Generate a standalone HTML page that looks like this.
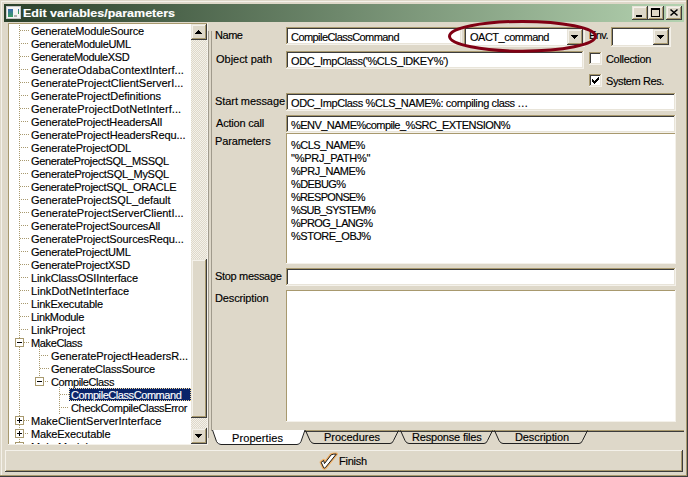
<!DOCTYPE html><html><head><meta charset="utf-8"><style>
html,body{margin:0;padding:0;}
body{width:688px;height:477px;position:relative;overflow:hidden;background:#DED8C9;font-family:'Liberation Sans', sans-serif;}
div{position:absolute;}
span{position:absolute;white-space:pre;line-height:13px;font-family:'Liberation Sans', sans-serif;-webkit-text-stroke:0.15px currentColor;}
</style></head><body>
<div style="left:0px;top:0px;width:688px;height:477px;background:#DED8C9;"></div><div style="left:1px;top:1px;width:685px;height:1px;background:#F4F1EA;"></div><div style="left:1px;top:1px;width:1px;height:474px;background:#F4F1EA;"></div><div style="left:686px;top:0px;width:1px;height:476px;background:#A8996E;"></div><div style="left:0px;top:475px;width:687px;height:1px;background:#A8996E;"></div><div style="left:687px;top:0px;width:1px;height:477px;background:#3C3C3C;"></div><div style="left:0px;top:476px;width:688px;height:1px;background:#3C3C3C;"></div><div style="left:4px;top:4px;width:680px;height:18px;background:linear-gradient(to right,#2A402A,#B4D2B0);"></div><div style="left:6px;top:6px;width:15px;height:13px;background:#F4F4F4;box-shadow:inset 0 0 0 1px #C8C8C8;"></div><div style="left:8px;top:9px;width:5px;height:8px;background:linear-gradient(#3A6AB0,#3AA060);"></div><div style="left:18px;top:9px;width:1px;height:5px;background:linear-gradient(#3A6AB0,#40B040);"></div><div style="left:14px;top:15px;width:3px;height:2px;background:#B0B0B0;"></div><div style="left:632px;top:6px;width:16px;height:14px;background:#3C3C3C;"></div><div style="left:632px;top:6px;width:15px;height:13px;background:#E8E4D9;"></div><div style="left:633px;top:7px;width:14px;height:12px;background:#F4F1EA;"></div><div style="left:633px;top:7px;width:14px;height:12px;background:#A8996E;"></div><div style="left:633px;top:7px;width:13px;height:11px;background:#F4F1EA;"></div><div style="left:634px;top:8px;width:12px;height:10px;background:#DED8C9;"></div><div style="left:648px;top:6px;width:16px;height:14px;background:#3C3C3C;"></div><div style="left:648px;top:6px;width:15px;height:13px;background:#E8E4D9;"></div><div style="left:649px;top:7px;width:14px;height:12px;background:#F4F1EA;"></div><div style="left:649px;top:7px;width:14px;height:12px;background:#A8996E;"></div><div style="left:649px;top:7px;width:13px;height:11px;background:#F4F1EA;"></div><div style="left:650px;top:8px;width:12px;height:10px;background:#DED8C9;"></div><div style="left:666px;top:6px;width:16px;height:14px;background:#3C3C3C;"></div><div style="left:666px;top:6px;width:15px;height:13px;background:#E8E4D9;"></div><div style="left:667px;top:7px;width:14px;height:12px;background:#F4F1EA;"></div><div style="left:667px;top:7px;width:14px;height:12px;background:#A8996E;"></div><div style="left:667px;top:7px;width:13px;height:11px;background:#F4F1EA;"></div><div style="left:668px;top:8px;width:12px;height:10px;background:#DED8C9;"></div><div style="left:636px;top:15px;width:6px;height:2px;background:#000;"></div><div style="left:651px;top:8px;width:9px;height:9px;background:#000;"></div><div style="left:652px;top:10px;width:7px;height:6px;background:#DED8C9;"></div><div style="left:8px;top:23px;width:200px;height:422px;background:#F4F1EA;"></div><div style="left:8px;top:23px;width:199px;height:421px;background:#A8996E;"></div><div style="left:9px;top:24px;width:182px;height:420px;background:#FFFFFF;"></div><div style="left:191px;top:24px;width:16px;height:420px;background:repeating-conic-gradient(#F4F1EA 0 25%, #DED8C9 0 50%) 0 0/2px 2px;"></div><div style="left:191px;top:24px;width:16px;height:16px;background:#3C3C3C;"></div><div style="left:191px;top:24px;width:15px;height:15px;background:#E8E4D9;"></div><div style="left:192px;top:25px;width:14px;height:14px;background:#F4F1EA;"></div><div style="left:192px;top:25px;width:14px;height:14px;background:#A8996E;"></div><div style="left:192px;top:25px;width:13px;height:13px;background:#F4F1EA;"></div><div style="left:193px;top:26px;width:12px;height:12px;background:#DED8C9;"></div><div style="left:191px;top:428px;width:16px;height:16px;background:#3C3C3C;"></div><div style="left:191px;top:428px;width:15px;height:15px;background:#E8E4D9;"></div><div style="left:192px;top:429px;width:14px;height:14px;background:#F4F1EA;"></div><div style="left:192px;top:429px;width:14px;height:14px;background:#A8996E;"></div><div style="left:192px;top:429px;width:13px;height:13px;background:#F4F1EA;"></div><div style="left:193px;top:430px;width:12px;height:12px;background:#DED8C9;"></div><div style="left:191px;top:259px;width:16px;height:159px;background:#3C3C3C;"></div><div style="left:191px;top:259px;width:15px;height:158px;background:#E8E4D9;"></div><div style="left:192px;top:260px;width:14px;height:157px;background:#F4F1EA;"></div><div style="left:192px;top:260px;width:14px;height:157px;background:#A8996E;"></div><div style="left:192px;top:260px;width:13px;height:156px;background:#F4F1EA;"></div><div style="left:193px;top:261px;width:12px;height:155px;background:#DED8C9;"></div><div style="left:208px;top:31px;width:1px;height:407px;background:#A09A8C;"></div><div style="left:211px;top:31px;width:1px;height:400px;background:#A09A8C;"></div><div style="left:286px;top:27px;width:176px;height:18px;background:#F4F1EA;"></div><div style="left:286px;top:27px;width:175px;height:17px;background:#A8996E;"></div><div style="left:287px;top:28px;width:174px;height:16px;background:#E8E4D9;"></div><div style="left:287px;top:28px;width:173px;height:15px;background:#3C3C3C;"></div><div style="left:288px;top:29px;width:172px;height:14px;background:#fff;"></div><div style="left:286px;top:51px;width:298px;height:18px;background:#F4F1EA;"></div><div style="left:286px;top:51px;width:297px;height:17px;background:#A8996E;"></div><div style="left:287px;top:52px;width:296px;height:16px;background:#E8E4D9;"></div><div style="left:287px;top:52px;width:295px;height:15px;background:#3C3C3C;"></div><div style="left:288px;top:53px;width:294px;height:14px;background:#fff;"></div><div style="left:464px;top:27px;width:121px;height:20px;background:#F4F1EA;"></div><div style="left:464px;top:27px;width:120px;height:19px;background:#A8996E;"></div><div style="left:465px;top:28px;width:119px;height:18px;background:#E8E4D9;"></div><div style="left:465px;top:28px;width:118px;height:17px;background:#3C3C3C;"></div><div style="left:466px;top:29px;width:117px;height:16px;background:#fff;"></div><div style="left:567px;top:29px;width:16px;height:16px;background:#3C3C3C;"></div><div style="left:567px;top:29px;width:15px;height:15px;background:#E8E4D9;"></div><div style="left:568px;top:30px;width:14px;height:14px;background:#F4F1EA;"></div><div style="left:568px;top:30px;width:14px;height:14px;background:#A8996E;"></div><div style="left:568px;top:30px;width:13px;height:13px;background:#F4F1EA;"></div><div style="left:569px;top:31px;width:12px;height:12px;background:#DED8C9;"></div><div style="left:611px;top:27px;width:60px;height:20px;background:#F4F1EA;"></div><div style="left:611px;top:27px;width:59px;height:19px;background:#A8996E;"></div><div style="left:612px;top:28px;width:58px;height:18px;background:#E8E4D9;"></div><div style="left:612px;top:28px;width:57px;height:17px;background:#3C3C3C;"></div><div style="left:613px;top:29px;width:56px;height:16px;background:#fff;"></div><div style="left:653px;top:29px;width:16px;height:16px;background:#3C3C3C;"></div><div style="left:653px;top:29px;width:15px;height:15px;background:#E8E4D9;"></div><div style="left:654px;top:30px;width:14px;height:14px;background:#F4F1EA;"></div><div style="left:654px;top:30px;width:14px;height:14px;background:#A8996E;"></div><div style="left:654px;top:30px;width:13px;height:13px;background:#F4F1EA;"></div><div style="left:655px;top:31px;width:12px;height:12px;background:#DED8C9;"></div><div style="left:589px;top:52px;width:13px;height:13px;background:#F4F1EA;"></div><div style="left:589px;top:52px;width:12px;height:12px;background:#A8996E;"></div><div style="left:590px;top:53px;width:11px;height:11px;background:#E8E4D9;"></div><div style="left:590px;top:53px;width:10px;height:10px;background:#3C3C3C;"></div><div style="left:591px;top:54px;width:9px;height:9px;background:#fff;"></div><div style="left:589px;top:74px;width:13px;height:13px;background:#F4F1EA;"></div><div style="left:589px;top:74px;width:12px;height:12px;background:#A8996E;"></div><div style="left:590px;top:75px;width:11px;height:11px;background:#E8E4D9;"></div><div style="left:590px;top:75px;width:10px;height:10px;background:#3C3C3C;"></div><div style="left:591px;top:76px;width:9px;height:9px;background:#fff;"></div><div style="left:286px;top:93px;width:390px;height:18px;background:#F4F1EA;"></div><div style="left:286px;top:93px;width:389px;height:17px;background:#A8996E;"></div><div style="left:287px;top:94px;width:388px;height:16px;background:#E8E4D9;"></div><div style="left:287px;top:94px;width:387px;height:15px;background:#3C3C3C;"></div><div style="left:288px;top:95px;width:386px;height:14px;background:#fff;"></div><div style="left:286px;top:115px;width:390px;height:18px;background:#F4F1EA;"></div><div style="left:286px;top:115px;width:389px;height:17px;background:#A8996E;"></div><div style="left:287px;top:116px;width:388px;height:16px;background:#E8E4D9;"></div><div style="left:287px;top:116px;width:387px;height:15px;background:#3C3C3C;"></div><div style="left:288px;top:117px;width:386px;height:14px;background:#fff;"></div><div style="left:286px;top:133px;width:390px;height:131px;background:#F4F1EA;"></div><div style="left:286px;top:133px;width:389px;height:130px;background:#A8996E;"></div><div style="left:287px;top:134px;width:388px;height:129px;background:#fff;"></div><div style="left:286px;top:268px;width:390px;height:18px;background:#F4F1EA;"></div><div style="left:286px;top:268px;width:389px;height:17px;background:#A8996E;"></div><div style="left:287px;top:269px;width:388px;height:16px;background:#E8E4D9;"></div><div style="left:287px;top:269px;width:387px;height:15px;background:#3C3C3C;"></div><div style="left:288px;top:270px;width:386px;height:14px;background:#fff;"></div><div style="left:286px;top:290px;width:390px;height:132px;background:#F4F1EA;"></div><div style="left:286px;top:290px;width:389px;height:131px;background:#A8996E;"></div><div style="left:287px;top:291px;width:388px;height:130px;background:#fff;"></div><div style="left:305px;top:430px;width:379px;height:1px;background:#A8996E;"></div><div style="left:305px;top:431px;width:379px;height:1px;background:#3C3C3C;"></div><svg width="688" height="477" style="position:absolute;left:0;top:0"><path d="M212 430 L218 444.5 L300 444.5 L305.5 430 Z" fill="#fff" stroke="none"/><path d="M212.5 430 L216.5 441.5 Q218 444.5 221 444.5 L297 444.5 Q300 444.5 301 441.5 L305 430" fill="none" stroke="#202020" stroke-width="1"/><path d="M305.5 430.5 L310 440.5 Q311.5 443.5 314 443.5 L390 443.5 Q392.5 443.5 393.5 440.5 L398.5 430.5" fill="none" stroke="#202020" stroke-width="1"/><path d="M400.5 430.5 L405 440.5 Q406.5 443.5 409 443.5 L484 443.5 Q486.5 443.5 487.5 440.5 L492.5 430.5" fill="none" stroke="#202020" stroke-width="1"/><path d="M494.5 430.5 L499 440.5 Q500.5 443.5 503 443.5 L579 443.5 Q581.5 443.5 582.5 440.5 L587.5 430.5" fill="none" stroke="#202020" stroke-width="1"/></svg><div style="left:5px;top:450px;width:678px;height:22px;background:#3C3C3C;"></div><div style="left:5px;top:450px;width:677px;height:21px;background:#F4F1EA;"></div><div style="left:6px;top:451px;width:676px;height:20px;background:#A8996E;"></div><div style="left:6px;top:451px;width:675px;height:19px;background:#DED8C9;"></div><svg width="688" height="477" style="position:absolute;left:0;top:0"><path d="M321.2 462.3 L323.6 460.5 L324.5 463.6 L331.2 454.8 Q333.5 453.9 336.3 454.1 L325.4 467.6 Q324.5 468.4 323.7 467.8 Z" fill="none" stroke="#F5A040" stroke-width="3.2" stroke-linejoin="round" opacity="0.75"/><path d="M321.2 462.3 L323.6 460.5 L324.5 463.6 L331.2 454.8 Q333.5 453.9 336.3 454.1 L325.4 467.6 Q324.5 468.4 323.7 467.8 Z" fill="#fff" stroke="#1a1a1a" stroke-width="1.0" stroke-linejoin="round"/></svg><div style="left:69px;top:388px;width:122px;height:13px;background:#0A246A;"></div><span style="left:23px;top:7px;font-size:11px;font-weight:700;color:#FFFFFF;transform:scaleX(1.1351);transform-origin:0 0">Edit variables/parameters</span><span style="left:215px;top:29px;font-size:11px;font-weight:400;color:#000000;letter-spacing:-0.461px">Name</span><span style="left:216px;top:53px;font-size:11px;font-weight:400;color:#000000;letter-spacing:-0.024px">Object path</span><span style="left:215px;top:95px;font-size:11px;font-weight:400;color:#000000;letter-spacing:-0.071px">Start message</span><span style="left:216px;top:117px;font-size:11px;font-weight:400;color:#000000;letter-spacing:-0.195px">Action call</span><span style="left:215px;top:135px;font-size:11px;font-weight:400;color:#000000;letter-spacing:-0.136px">Parameters</span><span style="left:215px;top:270px;font-size:11px;font-weight:400;color:#000000;letter-spacing:-0.319px">Stop message</span><span style="left:215px;top:292px;font-size:11px;font-weight:400;color:#000000;letter-spacing:-0.139px">Description</span><span style="left:589px;top:29px;font-size:11px;font-weight:400;color:#000000;letter-spacing:-0.551px">Env.</span><span style="left:606px;top:53px;font-size:11px;font-weight:400;color:#000000;letter-spacing:-0.331px">Collection</span><span style="left:606px;top:75px;font-size:11px;font-weight:400;color:#000000;letter-spacing:-0.396px">System Res.</span><span style="left:291px;top:31px;font-size:11px;font-weight:400;color:#000000;letter-spacing:-0.558px">CompileClassCommand</span><span style="left:291px;top:55px;font-size:11px;font-weight:400;color:#000000;letter-spacing:-0.409px">ODC_ImpClass(&#x27;%CLS_IDKEY%&#x27;)</span><span style="left:470px;top:31px;font-size:11px;font-weight:400;color:#000000;letter-spacing:-0.499px">OACT_command</span><span style="left:291px;top:97px;font-size:11px;font-weight:400;color:#000000;letter-spacing:-0.383px">ODC_ImpClass %CLS_NAME%: compiling class …</span><span style="left:291px;top:119px;font-size:11px;font-weight:400;color:#000000;letter-spacing:-0.533px">%ENV_NAME%compile_%SRC_EXTENSION%</span><span style="left:291px;top:139px;font-size:11px;font-weight:400;color:#000000;letter-spacing:-0.506px">%CLS_NAME%</span><span style="left:291px;top:152px;font-size:11px;font-weight:400;color:#000000;letter-spacing:-0.224px">&quot;%PRJ_PATH%&quot;</span><span style="left:291px;top:165px;font-size:11px;font-weight:400;color:#000000;letter-spacing:-0.445px">%PRJ_NAME%</span><span style="left:291px;top:178px;font-size:11px;font-weight:400;color:#000000;letter-spacing:-0.613px">%DEBUG%</span><span style="left:291px;top:191px;font-size:11px;font-weight:400;color:#000000;letter-spacing:-0.690px">%RESPONSE%</span><span style="left:291px;top:204px;font-size:11px;font-weight:400;color:#000000;letter-spacing:-0.786px">%SUB_SYSTEM%</span><span style="left:291px;top:217px;font-size:11px;font-weight:400;color:#000000;letter-spacing:-0.612px">%PROG_LANG%</span><span style="left:291px;top:230px;font-size:11px;font-weight:400;color:#000000;letter-spacing:-0.462px">%STORE_OBJ%</span><span style="left:232px;top:432px;font-size:11px;font-weight:400;color:#000000;letter-spacing:0.086px">Properties</span><span style="left:324px;top:431px;font-size:11px;font-weight:400;color:#000000;letter-spacing:-0.027px">Procedures</span><span style="left:412px;top:431px;font-size:11px;font-weight:400;color:#000000;letter-spacing:-0.190px">Response files</span><span style="left:515px;top:431px;font-size:11px;font-weight:400;color:#000000;letter-spacing:-0.094px">Description</span><span style="left:339px;top:455px;font-size:11px;font-weight:400;color:#000000;letter-spacing:-0.224px">Finish</span><div style="left:9px;top:24px;width:182px;height:420px;overflow:hidden"><span style="left:22px;top:1px;font-size:11px;font-weight:400;color:#000000;letter-spacing:-0.190px">GenerateModuleSource</span><span style="left:22px;top:14px;font-size:11px;font-weight:400;color:#000000;letter-spacing:-0.322px">GenerateModuleUML</span><span style="left:22px;top:27px;font-size:11px;font-weight:400;color:#000000;letter-spacing:-0.362px">GenerateModuleXSD</span><span style="left:22px;top:40px;font-size:11px;font-weight:400;color:#000000;letter-spacing:0.067px">GenerateOdabaContextInterf...</span><span style="left:22px;top:53px;font-size:11px;font-weight:400;color:#000000;letter-spacing:-0.018px">GenerateProjectClientServerI...</span><span style="left:22px;top:66px;font-size:11px;font-weight:400;color:#000000;letter-spacing:-0.056px">GenerateProjectDefinitions</span><span style="left:22px;top:79px;font-size:11px;font-weight:400;color:#000000;letter-spacing:0.054px">GenerateProjectDotNetInterf...</span><span style="left:22px;top:92px;font-size:11px;font-weight:400;color:#000000;letter-spacing:-0.116px">GenerateProjectHeadersAll</span><span style="left:22px;top:105px;font-size:11px;font-weight:400;color:#000000;letter-spacing:-0.095px">GenerateProjectHeadersRequ...</span><span style="left:22px;top:118px;font-size:11px;font-weight:400;color:#000000;letter-spacing:-0.151px">GenerateProjectODL</span><span style="left:22px;top:131px;font-size:11px;font-weight:400;color:#000000;letter-spacing:-0.377px">GenerateProjectSQL_MSSQL</span><span style="left:22px;top:144px;font-size:11px;font-weight:400;color:#000000;letter-spacing:-0.300px">GenerateProjectSQL_MySQL</span><span style="left:22px;top:157px;font-size:11px;font-weight:400;color:#000000;letter-spacing:-0.327px">GenerateProjectSQL_ORACLE</span><span style="left:22px;top:170px;font-size:11px;font-weight:400;color:#000000;letter-spacing:-0.068px">GenerateProjectSQL_default</span><span style="left:22px;top:183px;font-size:11px;font-weight:400;color:#000000;letter-spacing:-0.008px">GenerateProjectServerClientI...</span><span style="left:22px;top:196px;font-size:11px;font-weight:400;color:#000000;letter-spacing:-0.147px">GenerateProjectSourcesAll</span><span style="left:22px;top:209px;font-size:11px;font-weight:400;color:#000000;letter-spacing:-0.115px">GenerateProjectSourcesRequ...</span><span style="left:22px;top:222px;font-size:11px;font-weight:400;color:#000000;letter-spacing:-0.207px">GenerateProjectUML</span><span style="left:22px;top:235px;font-size:11px;font-weight:400;color:#000000;letter-spacing:-0.207px">GenerateProjectXSD</span><span style="left:22px;top:248px;font-size:11px;font-weight:400;color:#000000;letter-spacing:-0.116px">LinkClassOSIInterface</span><span style="left:22px;top:261px;font-size:11px;font-weight:400;color:#000000;letter-spacing:0.057px">LinkDotNetInterface</span><span style="left:22px;top:274px;font-size:11px;font-weight:400;color:#000000;letter-spacing:-0.186px">LinkExecutable</span><span style="left:22px;top:287px;font-size:11px;font-weight:400;color:#000000;letter-spacing:-0.327px">LinkModule</span><span style="left:22px;top:300px;font-size:11px;font-weight:400;color:#000000;letter-spacing:-0.038px">LinkProject</span><span style="left:22px;top:313px;font-size:11px;font-weight:400;color:#000000;letter-spacing:-0.378px">MakeClass</span><span style="left:42px;top:326px;font-size:11px;font-weight:400;color:#000000;letter-spacing:-0.069px">GenerateProjectHeadersR...</span><span style="left:42px;top:339px;font-size:11px;font-weight:400;color:#000000;letter-spacing:-0.223px">GenerateClassSource</span><span style="left:42px;top:352px;font-size:11px;font-weight:400;color:#000000;letter-spacing:-0.405px">CompileClass</span><span style="left:62px;top:365px;font-size:11px;font-weight:400;color:#FFFFFF;letter-spacing:-0.431px">CompileClassCommand</span><span style="left:62px;top:378px;font-size:11px;font-weight:400;color:#000000;letter-spacing:-0.340px">CheckCompileClassError</span><span style="left:22px;top:391px;font-size:11px;font-weight:400;color:#000000;letter-spacing:0.007px">MakeClientServerInterface</span><span style="left:22px;top:404px;font-size:11px;font-weight:400;color:#000000;letter-spacing:-0.138px">MakeExecutable</span><span style="left:22px;top:417px;font-size:11px;font-weight:400;color:#000000;letter-spacing:0.000px">MakeModule</span></div><svg width="688" height="477" style="position:absolute;left:0;top:0" shape-rendering="crispEdges"><defs><clipPath id="tc"><rect x="9" y="24" width="182" height="420"/></clipPath></defs><g clip-path="url(#tc)"><g fill="#A8996E"><rect x="19" y="25" width="1" height="1"/><rect x="19" y="27" width="1" height="1"/><rect x="19" y="29" width="1" height="1"/><rect x="19" y="31" width="1" height="1"/><rect x="19" y="33" width="1" height="1"/><rect x="19" y="35" width="1" height="1"/><rect x="19" y="37" width="1" height="1"/><rect x="19" y="39" width="1" height="1"/><rect x="19" y="41" width="1" height="1"/><rect x="19" y="43" width="1" height="1"/><rect x="19" y="45" width="1" height="1"/><rect x="19" y="47" width="1" height="1"/><rect x="19" y="49" width="1" height="1"/><rect x="19" y="51" width="1" height="1"/><rect x="19" y="53" width="1" height="1"/><rect x="19" y="55" width="1" height="1"/><rect x="19" y="57" width="1" height="1"/><rect x="19" y="59" width="1" height="1"/><rect x="19" y="61" width="1" height="1"/><rect x="19" y="63" width="1" height="1"/><rect x="19" y="65" width="1" height="1"/><rect x="19" y="67" width="1" height="1"/><rect x="19" y="69" width="1" height="1"/><rect x="19" y="71" width="1" height="1"/><rect x="19" y="73" width="1" height="1"/><rect x="19" y="75" width="1" height="1"/><rect x="19" y="77" width="1" height="1"/><rect x="19" y="79" width="1" height="1"/><rect x="19" y="81" width="1" height="1"/><rect x="19" y="83" width="1" height="1"/><rect x="19" y="85" width="1" height="1"/><rect x="19" y="87" width="1" height="1"/><rect x="19" y="89" width="1" height="1"/><rect x="19" y="91" width="1" height="1"/><rect x="19" y="93" width="1" height="1"/><rect x="19" y="95" width="1" height="1"/><rect x="19" y="97" width="1" height="1"/><rect x="19" y="99" width="1" height="1"/><rect x="19" y="101" width="1" height="1"/><rect x="19" y="103" width="1" height="1"/><rect x="19" y="105" width="1" height="1"/><rect x="19" y="107" width="1" height="1"/><rect x="19" y="109" width="1" height="1"/><rect x="19" y="111" width="1" height="1"/><rect x="19" y="113" width="1" height="1"/><rect x="19" y="115" width="1" height="1"/><rect x="19" y="117" width="1" height="1"/><rect x="19" y="119" width="1" height="1"/><rect x="19" y="121" width="1" height="1"/><rect x="19" y="123" width="1" height="1"/><rect x="19" y="125" width="1" height="1"/><rect x="19" y="127" width="1" height="1"/><rect x="19" y="129" width="1" height="1"/><rect x="19" y="131" width="1" height="1"/><rect x="19" y="133" width="1" height="1"/><rect x="19" y="135" width="1" height="1"/><rect x="19" y="137" width="1" height="1"/><rect x="19" y="139" width="1" height="1"/><rect x="19" y="141" width="1" height="1"/><rect x="19" y="143" width="1" height="1"/><rect x="19" y="145" width="1" height="1"/><rect x="19" y="147" width="1" height="1"/><rect x="19" y="149" width="1" height="1"/><rect x="19" y="151" width="1" height="1"/><rect x="19" y="153" width="1" height="1"/><rect x="19" y="155" width="1" height="1"/><rect x="19" y="157" width="1" height="1"/><rect x="19" y="159" width="1" height="1"/><rect x="19" y="161" width="1" height="1"/><rect x="19" y="163" width="1" height="1"/><rect x="19" y="165" width="1" height="1"/><rect x="19" y="167" width="1" height="1"/><rect x="19" y="169" width="1" height="1"/><rect x="19" y="171" width="1" height="1"/><rect x="19" y="173" width="1" height="1"/><rect x="19" y="175" width="1" height="1"/><rect x="19" y="177" width="1" height="1"/><rect x="19" y="179" width="1" height="1"/><rect x="19" y="181" width="1" height="1"/><rect x="19" y="183" width="1" height="1"/><rect x="19" y="185" width="1" height="1"/><rect x="19" y="187" width="1" height="1"/><rect x="19" y="189" width="1" height="1"/><rect x="19" y="191" width="1" height="1"/><rect x="19" y="193" width="1" height="1"/><rect x="19" y="195" width="1" height="1"/><rect x="19" y="197" width="1" height="1"/><rect x="19" y="199" width="1" height="1"/><rect x="19" y="201" width="1" height="1"/><rect x="19" y="203" width="1" height="1"/><rect x="19" y="205" width="1" height="1"/><rect x="19" y="207" width="1" height="1"/><rect x="19" y="209" width="1" height="1"/><rect x="19" y="211" width="1" height="1"/><rect x="19" y="213" width="1" height="1"/><rect x="19" y="215" width="1" height="1"/><rect x="19" y="217" width="1" height="1"/><rect x="19" y="219" width="1" height="1"/><rect x="19" y="221" width="1" height="1"/><rect x="19" y="223" width="1" height="1"/><rect x="19" y="225" width="1" height="1"/><rect x="19" y="227" width="1" height="1"/><rect x="19" y="229" width="1" height="1"/><rect x="19" y="231" width="1" height="1"/><rect x="19" y="233" width="1" height="1"/><rect x="19" y="235" width="1" height="1"/><rect x="19" y="237" width="1" height="1"/><rect x="19" y="239" width="1" height="1"/><rect x="19" y="241" width="1" height="1"/><rect x="19" y="243" width="1" height="1"/><rect x="19" y="245" width="1" height="1"/><rect x="19" y="247" width="1" height="1"/><rect x="19" y="249" width="1" height="1"/><rect x="19" y="251" width="1" height="1"/><rect x="19" y="253" width="1" height="1"/><rect x="19" y="255" width="1" height="1"/><rect x="19" y="257" width="1" height="1"/><rect x="19" y="259" width="1" height="1"/><rect x="19" y="261" width="1" height="1"/><rect x="19" y="263" width="1" height="1"/><rect x="19" y="265" width="1" height="1"/><rect x="19" y="267" width="1" height="1"/><rect x="19" y="269" width="1" height="1"/><rect x="19" y="271" width="1" height="1"/><rect x="19" y="273" width="1" height="1"/><rect x="19" y="275" width="1" height="1"/><rect x="19" y="277" width="1" height="1"/><rect x="19" y="279" width="1" height="1"/><rect x="19" y="281" width="1" height="1"/><rect x="19" y="283" width="1" height="1"/><rect x="19" y="285" width="1" height="1"/><rect x="19" y="287" width="1" height="1"/><rect x="19" y="289" width="1" height="1"/><rect x="19" y="291" width="1" height="1"/><rect x="19" y="293" width="1" height="1"/><rect x="19" y="295" width="1" height="1"/><rect x="19" y="297" width="1" height="1"/><rect x="19" y="299" width="1" height="1"/><rect x="19" y="301" width="1" height="1"/><rect x="19" y="303" width="1" height="1"/><rect x="19" y="305" width="1" height="1"/><rect x="19" y="307" width="1" height="1"/><rect x="19" y="309" width="1" height="1"/><rect x="19" y="311" width="1" height="1"/><rect x="19" y="313" width="1" height="1"/><rect x="19" y="315" width="1" height="1"/><rect x="19" y="317" width="1" height="1"/><rect x="19" y="319" width="1" height="1"/><rect x="19" y="321" width="1" height="1"/><rect x="19" y="323" width="1" height="1"/><rect x="19" y="325" width="1" height="1"/><rect x="19" y="327" width="1" height="1"/><rect x="19" y="329" width="1" height="1"/><rect x="19" y="331" width="1" height="1"/><rect x="19" y="333" width="1" height="1"/><rect x="19" y="335" width="1" height="1"/><rect x="19" y="337" width="1" height="1"/><rect x="19" y="339" width="1" height="1"/><rect x="19" y="341" width="1" height="1"/><rect x="19" y="343" width="1" height="1"/><rect x="19" y="345" width="1" height="1"/><rect x="19" y="347" width="1" height="1"/><rect x="19" y="349" width="1" height="1"/><rect x="19" y="351" width="1" height="1"/><rect x="19" y="353" width="1" height="1"/><rect x="19" y="355" width="1" height="1"/><rect x="19" y="357" width="1" height="1"/><rect x="19" y="359" width="1" height="1"/><rect x="19" y="361" width="1" height="1"/><rect x="19" y="363" width="1" height="1"/><rect x="19" y="365" width="1" height="1"/><rect x="19" y="367" width="1" height="1"/><rect x="19" y="369" width="1" height="1"/><rect x="19" y="371" width="1" height="1"/><rect x="19" y="373" width="1" height="1"/><rect x="19" y="375" width="1" height="1"/><rect x="19" y="377" width="1" height="1"/><rect x="19" y="379" width="1" height="1"/><rect x="19" y="381" width="1" height="1"/><rect x="19" y="383" width="1" height="1"/><rect x="19" y="385" width="1" height="1"/><rect x="19" y="387" width="1" height="1"/><rect x="19" y="389" width="1" height="1"/><rect x="19" y="391" width="1" height="1"/><rect x="19" y="393" width="1" height="1"/><rect x="19" y="395" width="1" height="1"/><rect x="19" y="397" width="1" height="1"/><rect x="19" y="399" width="1" height="1"/><rect x="19" y="401" width="1" height="1"/><rect x="19" y="403" width="1" height="1"/><rect x="19" y="405" width="1" height="1"/><rect x="19" y="407" width="1" height="1"/><rect x="19" y="409" width="1" height="1"/><rect x="19" y="411" width="1" height="1"/><rect x="19" y="413" width="1" height="1"/><rect x="19" y="415" width="1" height="1"/><rect x="19" y="417" width="1" height="1"/><rect x="19" y="419" width="1" height="1"/><rect x="19" y="421" width="1" height="1"/><rect x="19" y="423" width="1" height="1"/><rect x="19" y="425" width="1" height="1"/><rect x="19" y="427" width="1" height="1"/><rect x="19" y="429" width="1" height="1"/><rect x="19" y="431" width="1" height="1"/><rect x="19" y="433" width="1" height="1"/><rect x="19" y="435" width="1" height="1"/><rect x="19" y="437" width="1" height="1"/><rect x="19" y="439" width="1" height="1"/><rect x="19" y="441" width="1" height="1"/><rect x="19" y="443" width="1" height="1"/><rect x="20" y="30" width="1" height="1"/><rect x="22" y="30" width="1" height="1"/><rect x="24" y="30" width="1" height="1"/><rect x="26" y="30" width="1" height="1"/><rect x="28" y="30" width="1" height="1"/><rect x="21" y="43" width="1" height="1"/><rect x="23" y="43" width="1" height="1"/><rect x="25" y="43" width="1" height="1"/><rect x="27" y="43" width="1" height="1"/><rect x="20" y="56" width="1" height="1"/><rect x="22" y="56" width="1" height="1"/><rect x="24" y="56" width="1" height="1"/><rect x="26" y="56" width="1" height="1"/><rect x="28" y="56" width="1" height="1"/><rect x="21" y="69" width="1" height="1"/><rect x="23" y="69" width="1" height="1"/><rect x="25" y="69" width="1" height="1"/><rect x="27" y="69" width="1" height="1"/><rect x="20" y="82" width="1" height="1"/><rect x="22" y="82" width="1" height="1"/><rect x="24" y="82" width="1" height="1"/><rect x="26" y="82" width="1" height="1"/><rect x="28" y="82" width="1" height="1"/><rect x="21" y="95" width="1" height="1"/><rect x="23" y="95" width="1" height="1"/><rect x="25" y="95" width="1" height="1"/><rect x="27" y="95" width="1" height="1"/><rect x="20" y="108" width="1" height="1"/><rect x="22" y="108" width="1" height="1"/><rect x="24" y="108" width="1" height="1"/><rect x="26" y="108" width="1" height="1"/><rect x="28" y="108" width="1" height="1"/><rect x="21" y="121" width="1" height="1"/><rect x="23" y="121" width="1" height="1"/><rect x="25" y="121" width="1" height="1"/><rect x="27" y="121" width="1" height="1"/><rect x="20" y="134" width="1" height="1"/><rect x="22" y="134" width="1" height="1"/><rect x="24" y="134" width="1" height="1"/><rect x="26" y="134" width="1" height="1"/><rect x="28" y="134" width="1" height="1"/><rect x="21" y="147" width="1" height="1"/><rect x="23" y="147" width="1" height="1"/><rect x="25" y="147" width="1" height="1"/><rect x="27" y="147" width="1" height="1"/><rect x="20" y="160" width="1" height="1"/><rect x="22" y="160" width="1" height="1"/><rect x="24" y="160" width="1" height="1"/><rect x="26" y="160" width="1" height="1"/><rect x="28" y="160" width="1" height="1"/><rect x="21" y="173" width="1" height="1"/><rect x="23" y="173" width="1" height="1"/><rect x="25" y="173" width="1" height="1"/><rect x="27" y="173" width="1" height="1"/><rect x="20" y="186" width="1" height="1"/><rect x="22" y="186" width="1" height="1"/><rect x="24" y="186" width="1" height="1"/><rect x="26" y="186" width="1" height="1"/><rect x="28" y="186" width="1" height="1"/><rect x="21" y="199" width="1" height="1"/><rect x="23" y="199" width="1" height="1"/><rect x="25" y="199" width="1" height="1"/><rect x="27" y="199" width="1" height="1"/><rect x="20" y="212" width="1" height="1"/><rect x="22" y="212" width="1" height="1"/><rect x="24" y="212" width="1" height="1"/><rect x="26" y="212" width="1" height="1"/><rect x="28" y="212" width="1" height="1"/><rect x="21" y="225" width="1" height="1"/><rect x="23" y="225" width="1" height="1"/><rect x="25" y="225" width="1" height="1"/><rect x="27" y="225" width="1" height="1"/><rect x="20" y="238" width="1" height="1"/><rect x="22" y="238" width="1" height="1"/><rect x="24" y="238" width="1" height="1"/><rect x="26" y="238" width="1" height="1"/><rect x="28" y="238" width="1" height="1"/><rect x="21" y="251" width="1" height="1"/><rect x="23" y="251" width="1" height="1"/><rect x="25" y="251" width="1" height="1"/><rect x="27" y="251" width="1" height="1"/><rect x="20" y="264" width="1" height="1"/><rect x="22" y="264" width="1" height="1"/><rect x="24" y="264" width="1" height="1"/><rect x="26" y="264" width="1" height="1"/><rect x="28" y="264" width="1" height="1"/><rect x="21" y="277" width="1" height="1"/><rect x="23" y="277" width="1" height="1"/><rect x="25" y="277" width="1" height="1"/><rect x="27" y="277" width="1" height="1"/><rect x="20" y="290" width="1" height="1"/><rect x="22" y="290" width="1" height="1"/><rect x="24" y="290" width="1" height="1"/><rect x="26" y="290" width="1" height="1"/><rect x="28" y="290" width="1" height="1"/><rect x="21" y="303" width="1" height="1"/><rect x="23" y="303" width="1" height="1"/><rect x="25" y="303" width="1" height="1"/><rect x="27" y="303" width="1" height="1"/><rect x="20" y="316" width="1" height="1"/><rect x="22" y="316" width="1" height="1"/><rect x="24" y="316" width="1" height="1"/><rect x="26" y="316" width="1" height="1"/><rect x="28" y="316" width="1" height="1"/><rect x="21" y="329" width="1" height="1"/><rect x="23" y="329" width="1" height="1"/><rect x="25" y="329" width="1" height="1"/><rect x="27" y="329" width="1" height="1"/><rect x="20" y="342" width="1" height="1"/><rect x="22" y="342" width="1" height="1"/><rect x="24" y="342" width="1" height="1"/><rect x="26" y="342" width="1" height="1"/><rect x="28" y="342" width="1" height="1"/><rect x="41" y="355" width="1" height="1"/><rect x="43" y="355" width="1" height="1"/><rect x="45" y="355" width="1" height="1"/><rect x="47" y="355" width="1" height="1"/><rect x="40" y="368" width="1" height="1"/><rect x="42" y="368" width="1" height="1"/><rect x="44" y="368" width="1" height="1"/><rect x="46" y="368" width="1" height="1"/><rect x="48" y="368" width="1" height="1"/><rect x="41" y="381" width="1" height="1"/><rect x="43" y="381" width="1" height="1"/><rect x="45" y="381" width="1" height="1"/><rect x="47" y="381" width="1" height="1"/><rect x="60" y="394" width="1" height="1"/><rect x="62" y="394" width="1" height="1"/><rect x="64" y="394" width="1" height="1"/><rect x="66" y="394" width="1" height="1"/><rect x="68" y="394" width="1" height="1"/><rect x="61" y="407" width="1" height="1"/><rect x="63" y="407" width="1" height="1"/><rect x="65" y="407" width="1" height="1"/><rect x="67" y="407" width="1" height="1"/><rect x="20" y="420" width="1" height="1"/><rect x="22" y="420" width="1" height="1"/><rect x="24" y="420" width="1" height="1"/><rect x="26" y="420" width="1" height="1"/><rect x="28" y="420" width="1" height="1"/><rect x="21" y="433" width="1" height="1"/><rect x="23" y="433" width="1" height="1"/><rect x="25" y="433" width="1" height="1"/><rect x="27" y="433" width="1" height="1"/><rect x="20" y="446" width="1" height="1"/><rect x="22" y="446" width="1" height="1"/><rect x="24" y="446" width="1" height="1"/><rect x="26" y="446" width="1" height="1"/><rect x="28" y="446" width="1" height="1"/><rect x="39" y="347" width="1" height="1"/><rect x="39" y="349" width="1" height="1"/><rect x="39" y="351" width="1" height="1"/><rect x="39" y="353" width="1" height="1"/><rect x="39" y="355" width="1" height="1"/><rect x="39" y="357" width="1" height="1"/><rect x="39" y="359" width="1" height="1"/><rect x="39" y="361" width="1" height="1"/><rect x="39" y="363" width="1" height="1"/><rect x="39" y="365" width="1" height="1"/><rect x="39" y="367" width="1" height="1"/><rect x="39" y="369" width="1" height="1"/><rect x="39" y="371" width="1" height="1"/><rect x="39" y="373" width="1" height="1"/><rect x="39" y="375" width="1" height="1"/><rect x="39" y="377" width="1" height="1"/><rect x="39" y="379" width="1" height="1"/><rect x="59" y="387" width="1" height="1"/><rect x="59" y="389" width="1" height="1"/><rect x="59" y="391" width="1" height="1"/><rect x="59" y="393" width="1" height="1"/><rect x="59" y="395" width="1" height="1"/><rect x="59" y="397" width="1" height="1"/><rect x="59" y="399" width="1" height="1"/><rect x="59" y="401" width="1" height="1"/><rect x="59" y="403" width="1" height="1"/><rect x="59" y="405" width="1" height="1"/><rect x="59" y="407" width="1" height="1"/><rect x="59" y="409" width="1" height="1"/><rect x="59" y="411" width="1" height="1"/><rect x="59" y="413" width="1" height="1"/></g><g fill="#F5DB95"><rect x="70" y="388" width="1" height="1"/><rect x="70" y="400" width="1" height="1"/><rect x="72" y="388" width="1" height="1"/><rect x="72" y="400" width="1" height="1"/><rect x="74" y="388" width="1" height="1"/><rect x="74" y="400" width="1" height="1"/><rect x="76" y="388" width="1" height="1"/><rect x="76" y="400" width="1" height="1"/><rect x="78" y="388" width="1" height="1"/><rect x="78" y="400" width="1" height="1"/><rect x="80" y="388" width="1" height="1"/><rect x="80" y="400" width="1" height="1"/><rect x="82" y="388" width="1" height="1"/><rect x="82" y="400" width="1" height="1"/><rect x="84" y="388" width="1" height="1"/><rect x="84" y="400" width="1" height="1"/><rect x="86" y="388" width="1" height="1"/><rect x="86" y="400" width="1" height="1"/><rect x="88" y="388" width="1" height="1"/><rect x="88" y="400" width="1" height="1"/><rect x="90" y="388" width="1" height="1"/><rect x="90" y="400" width="1" height="1"/><rect x="92" y="388" width="1" height="1"/><rect x="92" y="400" width="1" height="1"/><rect x="94" y="388" width="1" height="1"/><rect x="94" y="400" width="1" height="1"/><rect x="96" y="388" width="1" height="1"/><rect x="96" y="400" width="1" height="1"/><rect x="98" y="388" width="1" height="1"/><rect x="98" y="400" width="1" height="1"/><rect x="100" y="388" width="1" height="1"/><rect x="100" y="400" width="1" height="1"/><rect x="102" y="388" width="1" height="1"/><rect x="102" y="400" width="1" height="1"/><rect x="104" y="388" width="1" height="1"/><rect x="104" y="400" width="1" height="1"/><rect x="106" y="388" width="1" height="1"/><rect x="106" y="400" width="1" height="1"/><rect x="108" y="388" width="1" height="1"/><rect x="108" y="400" width="1" height="1"/><rect x="110" y="388" width="1" height="1"/><rect x="110" y="400" width="1" height="1"/><rect x="112" y="388" width="1" height="1"/><rect x="112" y="400" width="1" height="1"/><rect x="114" y="388" width="1" height="1"/><rect x="114" y="400" width="1" height="1"/><rect x="116" y="388" width="1" height="1"/><rect x="116" y="400" width="1" height="1"/><rect x="118" y="388" width="1" height="1"/><rect x="118" y="400" width="1" height="1"/><rect x="120" y="388" width="1" height="1"/><rect x="120" y="400" width="1" height="1"/><rect x="122" y="388" width="1" height="1"/><rect x="122" y="400" width="1" height="1"/><rect x="124" y="388" width="1" height="1"/><rect x="124" y="400" width="1" height="1"/><rect x="126" y="388" width="1" height="1"/><rect x="126" y="400" width="1" height="1"/><rect x="128" y="388" width="1" height="1"/><rect x="128" y="400" width="1" height="1"/><rect x="130" y="388" width="1" height="1"/><rect x="130" y="400" width="1" height="1"/><rect x="132" y="388" width="1" height="1"/><rect x="132" y="400" width="1" height="1"/><rect x="134" y="388" width="1" height="1"/><rect x="134" y="400" width="1" height="1"/><rect x="136" y="388" width="1" height="1"/><rect x="136" y="400" width="1" height="1"/><rect x="138" y="388" width="1" height="1"/><rect x="138" y="400" width="1" height="1"/><rect x="140" y="388" width="1" height="1"/><rect x="140" y="400" width="1" height="1"/><rect x="142" y="388" width="1" height="1"/><rect x="142" y="400" width="1" height="1"/><rect x="144" y="388" width="1" height="1"/><rect x="144" y="400" width="1" height="1"/><rect x="146" y="388" width="1" height="1"/><rect x="146" y="400" width="1" height="1"/><rect x="148" y="388" width="1" height="1"/><rect x="148" y="400" width="1" height="1"/><rect x="150" y="388" width="1" height="1"/><rect x="150" y="400" width="1" height="1"/><rect x="152" y="388" width="1" height="1"/><rect x="152" y="400" width="1" height="1"/><rect x="154" y="388" width="1" height="1"/><rect x="154" y="400" width="1" height="1"/><rect x="156" y="388" width="1" height="1"/><rect x="156" y="400" width="1" height="1"/><rect x="158" y="388" width="1" height="1"/><rect x="158" y="400" width="1" height="1"/><rect x="160" y="388" width="1" height="1"/><rect x="160" y="400" width="1" height="1"/><rect x="162" y="388" width="1" height="1"/><rect x="162" y="400" width="1" height="1"/><rect x="164" y="388" width="1" height="1"/><rect x="164" y="400" width="1" height="1"/><rect x="166" y="388" width="1" height="1"/><rect x="166" y="400" width="1" height="1"/><rect x="168" y="388" width="1" height="1"/><rect x="168" y="400" width="1" height="1"/><rect x="170" y="388" width="1" height="1"/><rect x="170" y="400" width="1" height="1"/><rect x="172" y="388" width="1" height="1"/><rect x="172" y="400" width="1" height="1"/><rect x="174" y="388" width="1" height="1"/><rect x="174" y="400" width="1" height="1"/><rect x="176" y="388" width="1" height="1"/><rect x="176" y="400" width="1" height="1"/><rect x="178" y="388" width="1" height="1"/><rect x="178" y="400" width="1" height="1"/><rect x="180" y="388" width="1" height="1"/><rect x="180" y="400" width="1" height="1"/><rect x="182" y="388" width="1" height="1"/><rect x="182" y="400" width="1" height="1"/><rect x="184" y="388" width="1" height="1"/><rect x="184" y="400" width="1" height="1"/><rect x="186" y="388" width="1" height="1"/><rect x="186" y="400" width="1" height="1"/><rect x="188" y="388" width="1" height="1"/><rect x="188" y="400" width="1" height="1"/><rect x="190" y="388" width="1" height="1"/><rect x="190" y="400" width="1" height="1"/><rect x="190" y="388" width="1" height="1"/><rect x="69" y="389" width="1" height="1"/><rect x="190" y="390" width="1" height="1"/><rect x="69" y="391" width="1" height="1"/><rect x="190" y="392" width="1" height="1"/><rect x="69" y="393" width="1" height="1"/><rect x="190" y="394" width="1" height="1"/><rect x="69" y="395" width="1" height="1"/><rect x="190" y="396" width="1" height="1"/><rect x="69" y="397" width="1" height="1"/><rect x="190" y="398" width="1" height="1"/><rect x="69" y="399" width="1" height="1"/><rect x="190" y="400" width="1" height="1"/></g><rect x="15" y="338" width="9" height="9" fill="#fff"/><rect x="15.5" y="338.5" width="8" height="8" fill="none" stroke="#A8996E"/><rect x="17" y="342" width="5" height="1" fill="#000"/><rect x="35" y="377" width="9" height="9" fill="#fff"/><rect x="35.5" y="377.5" width="8" height="8" fill="none" stroke="#A8996E"/><rect x="37" y="381" width="5" height="1" fill="#000"/><rect x="15" y="416" width="9" height="9" fill="#fff"/><rect x="15.5" y="416.5" width="8" height="8" fill="none" stroke="#A8996E"/><rect x="17" y="420" width="5" height="1" fill="#000"/><rect x="19" y="418" width="1" height="5" fill="#000"/><rect x="15" y="429" width="9" height="9" fill="#fff"/><rect x="15.5" y="429.5" width="8" height="8" fill="none" stroke="#A8996E"/><rect x="17" y="433" width="5" height="1" fill="#000"/><rect x="19" y="431" width="1" height="5" fill="#000"/><rect x="15" y="442" width="9" height="9" fill="#fff"/><rect x="15.5" y="442.5" width="8" height="8" fill="none" stroke="#A8996E"/><rect x="17" y="446" width="5" height="1" fill="#000"/><rect x="19" y="444" width="1" height="5" fill="#000"/></g><rect x="198" y="30" width="1" height="1" fill="#000"/><rect x="197" y="31" width="3" height="1" fill="#000"/><rect x="196" y="32" width="5" height="1" fill="#000"/><rect x="195" y="33" width="7" height="1" fill="#000"/><rect x="195" y="434" width="7" height="1" fill="#000"/><rect x="196" y="435" width="5" height="1" fill="#000"/><rect x="197" y="436" width="3" height="1" fill="#000"/><rect x="198" y="437" width="1" height="1" fill="#000"/><rect x="571" y="35" width="7" height="1" fill="#000"/><rect x="572" y="36" width="5" height="1" fill="#000"/><rect x="573" y="37" width="3" height="1" fill="#000"/><rect x="574" y="38" width="1" height="1" fill="#000"/><rect x="657" y="35" width="7" height="1" fill="#000"/><rect x="658" y="36" width="5" height="1" fill="#000"/><rect x="659" y="37" width="3" height="1" fill="#000"/><rect x="660" y="38" width="1" height="1" fill="#000"/><path d="M670.5 9.5L677.5 15.5M677.5 9.5L670.5 15.5" stroke="#000" stroke-width="1.6" shape-rendering="auto"/><rect x="598" y="77" width="1" height="1" fill="#000"/><rect x="597" y="78" width="1" height="1" fill="#000"/><rect x="598" y="78" width="1" height="1" fill="#000"/><rect x="592" y="79" width="1" height="1" fill="#000"/><rect x="596" y="79" width="1" height="1" fill="#000"/><rect x="597" y="79" width="1" height="1" fill="#000"/><rect x="598" y="79" width="1" height="1" fill="#000"/><rect x="592" y="80" width="1" height="1" fill="#000"/><rect x="593" y="80" width="1" height="1" fill="#000"/><rect x="595" y="80" width="1" height="1" fill="#000"/><rect x="596" y="80" width="1" height="1" fill="#000"/><rect x="597" y="80" width="1" height="1" fill="#000"/><rect x="592" y="81" width="1" height="1" fill="#000"/><rect x="593" y="81" width="1" height="1" fill="#000"/><rect x="594" y="81" width="1" height="1" fill="#000"/><rect x="595" y="81" width="1" height="1" fill="#000"/><rect x="596" y="81" width="1" height="1" fill="#000"/><rect x="593" y="82" width="1" height="1" fill="#000"/><rect x="594" y="82" width="1" height="1" fill="#000"/><rect x="595" y="82" width="1" height="1" fill="#000"/><rect x="594" y="83" width="1" height="1" fill="#000"/><ellipse cx="522.5" cy="36.3" rx="73" ry="14.9" fill="none" stroke="#800014" stroke-width="3" shape-rendering="auto"/></svg>
</body></html>
